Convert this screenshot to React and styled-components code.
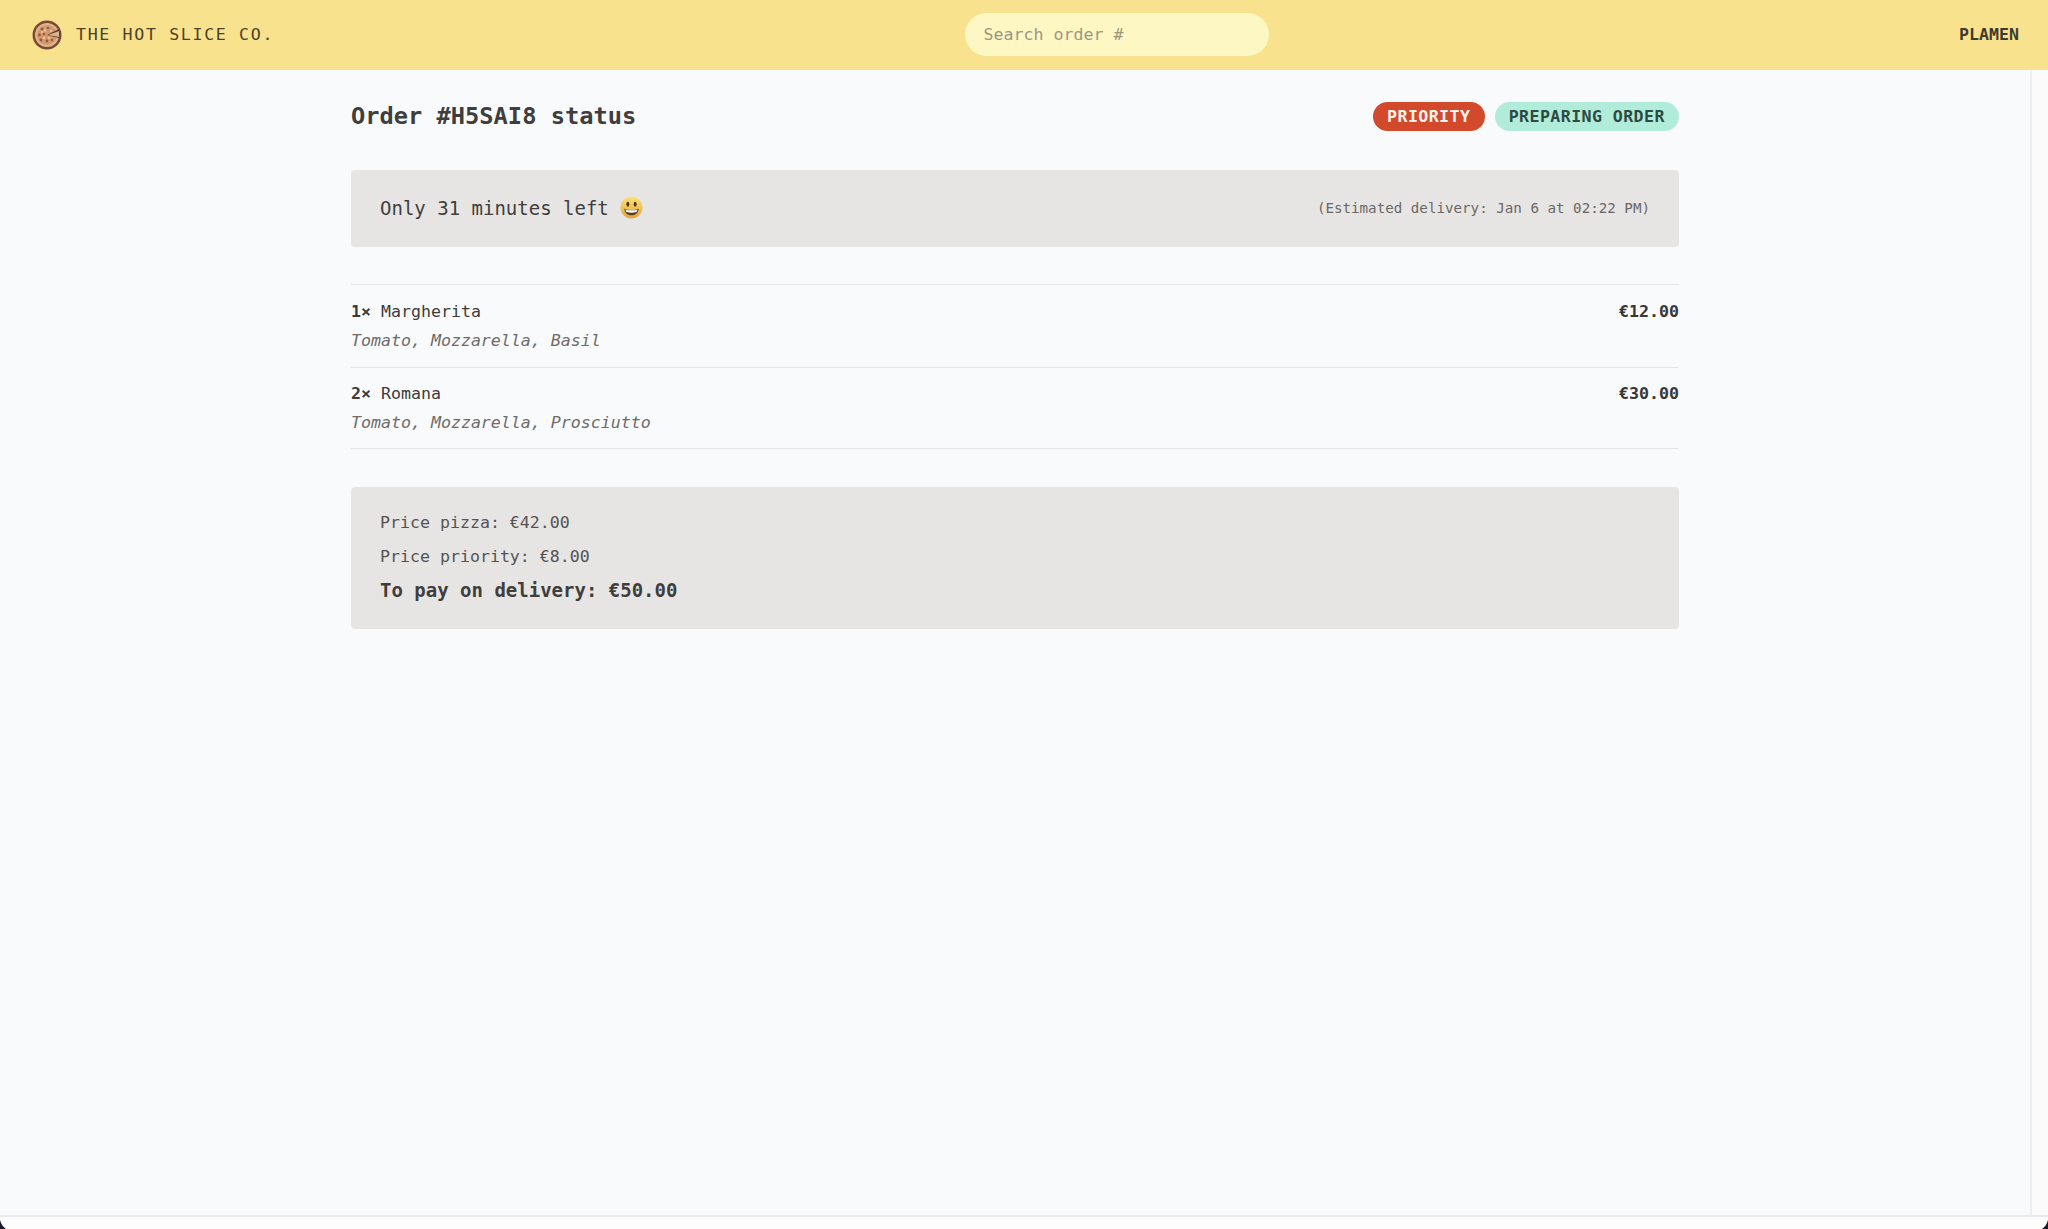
import React from 'react'
import styled, { createGlobalStyle } from 'styled-components'

const GlobalStyle = createGlobalStyle`
  * { box-sizing: border-box; }
  html, body { margin: 0; padding: 0; height: 100%; }
  body {
    background: #fdfdfd;
    color: #403e3c;
    font-family: "DejaVu Sans Mono", "Liberation Mono", monospace;
  }
`

const Page = styled.div`
  position: relative;
  width: 2048px;
  height: 1229px;
  display: flex;
  flex-direction: column;
  overflow: hidden;
`

const Header = styled.header`
  height: 70px;
  flex-shrink: 0;
  display: flex;
  align-items: center;
  justify-content: space-between;
  padding: 0 29px 0 32px;
  background: #f9e28e;
  border-bottom: 1px solid #f6e09a;
`

const Logo = styled.a`
  display: flex;
  align-items: center;
  gap: 14px;
  font-size: 16.6px;
  letter-spacing: 0.1em;
  color: #4a412a;
`

const Search = styled.input`
  width: 304px;
  height: 43px;
  padding: 0 19px;
  border: none;
  border-radius: 22px;
  background: #fdf7c3;
  color: #403e3c;
  font-family: inherit;
  font-size: 16.6px;
  &::placeholder { color: #9c9680; opacity: 1; }
`

const User = styled.div`
  font-size: 16.6px;
  font-weight: 700;
  color: #3f3b30;
`

const Body = styled.div`
  flex: 1;
  display: flex;
  min-height: 0;
  background: #f9fafc;
`

const Main = styled.main`
  flex: 1;
  padding: 32px 0 0;
  display: flex;
  flex-direction: column;
  align-items: center;
`

const Scrolltrack = styled.div`
  width: 18px;
  background: #fbfbfc;
  border-left: 2px solid #eeeff1;
`

const BottomEdge = styled.div`
  height: 14px;
  flex-shrink: 0;
  background: #fdfdfd;
  border-top: 2px solid #e9eaec;
`

const Corner = styled.svg`
  position: absolute;
  bottom: 0;
  width: 6px;
  height: 9px;
  ${(props) => (props.$side === 'left' ? 'left: 0;' : 'right: 0; transform: scaleX(-1);')}
`

const Content = styled.div`
  width: 1328px;
`

const TitleRow = styled.div`
  height: 29px;
  display: flex;
  align-items: center;
  justify-content: space-between;
`

const Title = styled.h2`
  margin: 0 0 1px;
  font-size: 23.7px;
  font-weight: 700;
  color: #403e3c;
`

const Badges = styled.div`
  display: flex;
  gap: 10px;
`

const Badge = styled.span`
  height: 29px;
  padding: 0 14.2px;
  display: flex;
  align-items: center;
  border-radius: 15px;
  font-size: 16.6px;
  font-weight: 700;
  letter-spacing: 0.025em;
  background: ${(props) => props.$bg};
  color: ${(props) => props.$color};
`

const Panel = styled.section`
  background: #e7e5e4;
  border-radius: 4px;
  padding: 0 29px;
`

const DeliveryPanel = styled(Panel)`
  margin-top: 39px;
  height: 77px;
  padding-bottom: 2px;
  display: flex;
  align-items: center;
  justify-content: space-between;
`

const Countdown = styled.p`
  margin: 0;
  display: flex;
  align-items: center;
  gap: 11px;
  font-size: 19px;
  font-weight: 400;
  color: #403e3c;
`

const Estimate = styled.p`
  margin: 0;
  font-size: 14.2px;
  color: #6a6866;
`

const ItemList = styled.ul`
  list-style: none;
  margin: 37px 0 0;
  padding: 0;
  border-top: 1px solid #e7e5e4;
  border-bottom: 1px solid #e7e5e4;
`

const Item = styled.li`
  height: 82px;
  padding-top: 16px;
  & + & {
    height: 81px;
    padding-top: 15px;
    border-top: 1px solid #e7e5e4;
  }
`

const ItemRow = styled.div`
  display: flex;
  justify-content: space-between;
  font-size: 16.6px;
  line-height: 22px;
  color: #3d3c3a;
`

const Qty = styled.b`
  font-weight: 700;
`

const Price = styled.b`
  font-weight: 700;
  color: #383735;
`

const Ingredients = styled.p`
  margin: 7px 0 0;
  font-size: 16.6px;
  line-height: 22px;
  font-style: italic;
  color: #6e6c6a;
`

const TotalsPanel = styled(Panel)`
  margin-top: 38px;
  height: 142px;
  padding-top: 24px;
`

const TotalLine = styled.p`
  margin: 0 0 11px;
  font-size: 16.6px;
  line-height: 23px;
  color: #555351;
`

const GrandTotal = styled.p`
  margin: -2px 0 0;
  font-size: 19px;
  line-height: 26px;
  font-weight: 700;
  color: #403e3c;
`

const PizzaIcon = () => (
  <svg width="30" height="30" viewBox="0 0 30 30" aria-hidden="true">
    <circle cx="15" cy="15" r="14.5" fill="#7a4a38" />
    <circle cx="15" cy="15" r="12" fill="#e0b48c" />
    <circle cx="15" cy="15" r="10" fill="#d09a6c" />
    <path d="M15 15 L27 9 A13 13 0 0 1 27 18 Z" fill="#5d3527" />
    <path d="M16 15 L27 11 L27 17 Z" fill="#d9b48a" />
    <g fill="#a3553a">
      <circle cx="10" cy="9" r="1.4" />
      <circle cx="16" cy="8" r="1.3" />
      <circle cx="7.5" cy="15" r="1.4" />
      <circle cx="12" cy="14" r="1.2" />
      <circle cx="9" cy="20" r="1.4" />
      <circle cx="15" cy="21" r="1.4" />
      <circle cx="20" cy="20" r="1.2" />
    </g>
    <g fill="#f0d9b0">
      <circle cx="13" cy="10.5" r="1" />
      <circle cx="10" cy="12" r="0.9" />
      <circle cx="12" cy="18" r="1" />
      <circle cx="17" cy="18" r="0.9" />
      <circle cx="19" cy="11" r="0.9" />
    </g>
  </svg>
)

const SmileyIcon = () => (
  <svg width="23" height="23" viewBox="0 0 24 24" aria-hidden="true">
    <defs>
      <linearGradient id="smile-face" x1="0" y1="0" x2="0" y2="1">
        <stop offset="0" stopColor="#fbe27a" />
        <stop offset="1" stopColor="#e8a23a" />
      </linearGradient>
    </defs>
    <circle cx="12" cy="12" r="11.5" fill="url(#smile-face)" />
    <ellipse cx="8.2" cy="8.6" rx="1.5" ry="2.5" fill="#4a3420" />
    <ellipse cx="15.8" cy="8.6" rx="1.5" ry="2.5" fill="#4a3420" />
    <path d="M4.4 13.2 C8 15 16 15 19.6 13.2 C19 18 15.6 20.2 12 20.2 C8.4 20.2 5 18 4.4 13.2 Z" fill="#5a3a20" />
    <path d="M5.6 14 C9 15.3 15 15.3 18.4 14 C18 15.6 17.6 16.2 17 16.8 C14 17.6 10 17.6 7 16.8 C6.4 16.2 6 15.6 5.6 14 Z" fill="#fff" />
  </svg>
)

const WindowCorner = ({ side }) => (
  <Corner $side={side} viewBox="0 0 6 9" aria-hidden="true">
    <path d="M0 0 C1 4 3 7 6 9 L0 9 Z" fill="#1a1a2a" />
  </Corner>
)

const items = [
  { qty: 1, name: 'Margherita', price: '€12.00', ingredients: 'Tomato, Mozzarella, Basil' },
  { qty: 2, name: 'Romana', price: '€30.00', ingredients: 'Tomato, Mozzarella, Prosciutto' },
]

export default function App() {
  return (
    <Page>
      <GlobalStyle />
      <Header>
        <Logo>
          <PizzaIcon />
          THE HOT SLICE CO.
        </Logo>
        <Search placeholder="Search order #" />
        <User>PLAMEN</User>
      </Header>
      <Body>
        <Main>
          <Content>
            <TitleRow>
              <Title>Order #H5SAI8 status</Title>
              <Badges>
                <Badge $bg="#d24a2b" $color="#fdf3ee">PRIORITY</Badge>
                <Badge $bg="#b0ecd9" $color="#2f4a42">PREPARING ORDER</Badge>
              </Badges>
            </TitleRow>
            <DeliveryPanel>
              <Countdown>
                Only 31 minutes left
                <SmileyIcon />
              </Countdown>
              <Estimate>(Estimated delivery: Jan 6 at 02:22 PM)</Estimate>
            </DeliveryPanel>
            <ItemList>
              {items.map((item) => (
                <Item key={item.name}>
                  <ItemRow>
                    <span>
                      <Qty>{item.qty}×</Qty> {item.name}
                    </span>
                    <Price>{item.price}</Price>
                  </ItemRow>
                  <Ingredients>{item.ingredients}</Ingredients>
                </Item>
              ))}
            </ItemList>
            <TotalsPanel>
              <TotalLine>Price pizza: €42.00</TotalLine>
              <TotalLine>Price priority: €8.00</TotalLine>
              <GrandTotal>To pay on delivery: €50.00</GrandTotal>
            </TotalsPanel>
          </Content>
        </Main>
        <Scrolltrack />
      </Body>
      <BottomEdge />
      <WindowCorner side="left" />
      <WindowCorner side="right" />
    </Page>
  )
}
